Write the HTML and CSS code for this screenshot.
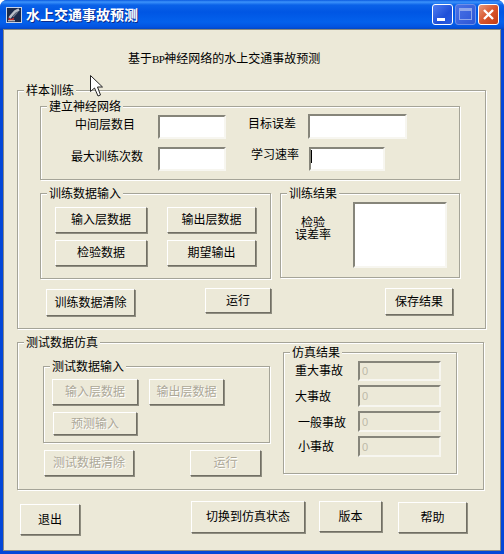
FILE: index.html
```html
<!DOCTYPE html>
<html>
<head>
    <title>水上交通事故预测</title>
    <link rel="stylesheet" href="styles.css">
</head>
<body>
    <div class="window">
        <div class="titlebar">
            <svg class="app-icon" width="16" height="16" viewBox="0 0 16 16">
                <rect x="0.5" y="0.5" width="15" height="15" fill="#1c2a4a" stroke="#c9d3e6"/>
                <path d="M13 2.5 L9 4.5 L5 9 L3.5 11" fill="none" stroke="#b9bec8" stroke-width="2.6"/>
                <path d="M11.5 5 L7 10" fill="none" stroke="#6c7486" stroke-width="1.2"/>
                <path d="M2.5 11.5 L5 13 L8 11.5" fill="none" stroke="#c22f2f" stroke-width="1.8"/>
                <path d="M2 13.8 L9 13.8" fill="none" stroke="#e8e4e0" stroke-width="1"/>
            </svg>
            <span class="title-text">水上交通事故预测</span>
            <div class="caption-btn minimize"><span class="min-glyph"></span></div>
            <div class="caption-btn maximize"><span class="max-glyph"></span></div>
            <div class="caption-btn close">
                <svg width="13" height="13" viewBox="0 0 13 13">
                    <path d="M2 2 L11 11 M11 2 L2 11" stroke="#fff" stroke-width="2.4"/>
                </svg>
            </div>
        </div>

        <div class="client">
            <div class="heading">基于<span class="latin">BP</span>神经网络的水上交通事故预测</div>

            <div class="group sample-group">
                <div class="group-title">样本训练</div>

                <div class="group network-group">
                    <div class="group-title">建立神经网络</div>
                    <div class="row">
                        <label class="lbl-layers">中间层数目</label>
                        <input class="field field-layers" type="text">
                        <label class="lbl-error">目标误差</label>
                        <input class="field field-error" type="text">
                    </div>
                    <div class="row row-second">
                        <label class="lbl-times">最大训练次数</label>
                        <input class="field field-times" type="text">
                        <label class="lbl-rate">学习速率</label>
                        <input class="field field-rate" type="text">
                    </div>
                </div>

                <div class="row train-row">
                    <div class="group train-input">
                        <div class="group-title">训练数据输入</div>
                        <div class="train-buttons">
                            <button class="btn">输入层数据</button>
                            <button class="btn">输出层数据</button>
                            <button class="btn">检验数据</button>
                            <button class="btn">期望输出</button>
                        </div>
                    </div>
                    <div class="group train-result">
                        <div class="group-title">训练结果</div>
                        <div class="row">
                            <div class="result-label">检验<br>误差率</div>
                            <textarea class="field result-box"></textarea>
                        </div>
                    </div>
                </div>

                <div class="row action-row">
                    <button class="btn btn-clear">训练数据清除</button>
                    <button class="btn btn-run">运行</button>
                    <button class="btn btn-save">保存结果</button>
                </div>
            </div>

            <div class="group sim-group">
                <div class="group-title">测试数据仿真</div>
                <div class="row">
                    <div class="sim-left">
                        <div class="group test-input">
                            <div class="group-title">测试数据输入</div>
                            <div class="test-buttons">
                                <button class="btn" disabled>输入层数据</button>
                                <button class="btn" disabled>输出层数据</button>
                                <button class="btn btn-predict" disabled>预测输入</button>
                            </div>
                        </div>
                        <div class="row test-actions">
                            <button class="btn btn-test-clear" disabled>测试数据清除</button>
                            <button class="btn btn-test-run" disabled>运行</button>
                        </div>
                    </div>
                    <div class="group sim-result">
                        <div class="group-title">仿真结果</div>
                        <div class="sim-rows">
                            <div class="sim-row sim-row-a">
                                <label class="sim-label">重大事故</label>
                                <input class="field sim-field" type="text" value="0" disabled>
                            </div>
                            <div class="sim-row sim-row-b">
                                <label class="sim-label">大事故</label>
                                <input class="field sim-field" type="text" value="0" disabled>
                            </div>
                            <div class="sim-row sim-row-c">
                                <label class="sim-label">一般事故</label>
                                <input class="field sim-field" type="text" value="0" disabled>
                            </div>
                            <div class="sim-row sim-row-c">
                                <label class="sim-label sim-label-last">小事故</label>
                                <input class="field sim-field" type="text" value="0" disabled>
                            </div>
                        </div>
                    </div>
                </div>
            </div>

            <div class="row bottom-row">
                <button class="btn btn-exit">退出</button>
                <button class="btn btn-switch">切换到仿真状态</button>
                <button class="btn btn-version">版本</button>
                <button class="btn btn-help">帮助</button>
            </div>
        </div>

        <svg class="cursor" width="14" height="22" viewBox="0 0 14 22">
            <path d="M0.5 0.5 L0.5 16.5 L4.5 13 L8 21 L10.5 20 L7.5 12 L12.5 12 Z" fill="#fff" stroke="#222" stroke-width="1"/>
        </svg>
    </div>
</body>
</html>
```

FILE: styles.css
```css
body {
    margin: 0;
    background: #fff;
    font-family: "Noto Sans CJK SC", "Liberation Sans", sans-serif;
    font-size: 12px;
    color: #000;
}

.window {
    position: relative;
    width: 504px;
    height: 554px;
    background: #0347d8;
    border-radius: 7px 7px 0 0;
    display: flex;
    flex-direction: column;
    overflow: hidden;
}

.titlebar {
    height: 30px;
    box-sizing: border-box;
    display: flex;
    align-items: center;
    padding: 0 5px 2px 6px;
    background: linear-gradient(#0a5ae0 0, #3c93fb 2px, #0a62e8 5px, #0056e4 12px, #0461ec 22px, #0353e0 27px, #0242b8 30px);
}

.app-icon {
    margin-top: 1px;
}

.title-text {
    flex: 1;
    margin-left: 4px;
    color: #fff;
    font-size: 14px;
    font-weight: bold;
    line-height: 20px;
    text-shadow: 1px 1px 0 #0c2a8c;
}

.caption-btn {
    width: 21px;
    height: 21px;
    box-sizing: border-box;
    margin-left: 2px;
    border: 1px solid #fff;
    border-radius: 3px;
    display: flex;
    align-items: center;
    justify-content: center;
}

.minimize {
    background: linear-gradient(135deg, #4f7df0, #1f4fd8 60%, #2a5de0);
    align-items: flex-end;
    justify-content: flex-start;
}

.min-glyph {
    width: 8px;
    height: 3px;
    margin: 0 0 3px 4px;
    background: #fff;
}

.maximize {
    background: linear-gradient(135deg, #4a72e6, #2c56d6);
    border-color: #6d8fe8;
}

.max-glyph {
    width: 11px;
    height: 8px;
    border: 1px solid #8ea6ea;
    border-top-width: 3px;
}

.close {
    background: linear-gradient(135deg, #e89a7c, #d8552c 50%, #c23c14);
}

.client {
    flex: 1;
    margin: 0 4px 4px;
    background: #ece9d8;
    box-shadow: 0 0 0 1px #8a8a80;
}

.heading {
    margin: 21px 0 0 124px;
    height: 14px;
    line-height: 14px;
}

.latin {
    font-family: "Liberation Serif", serif;
    font-size: 11px;
    letter-spacing: -0.6px;
}

.row {
    display: flex;
    align-items: flex-start;
}

.group {
    box-sizing: border-box;
    border: 1px solid #a5a498;
    box-shadow: 1px 1px 0 #fff, inset 1px 1px 0 #fff;
}

.group-title {
    width: max-content;
    height: 16px;
    line-height: 16px;
    margin: -9px 0 0 6px;
    padding: 0 2px;
    background: #ece9d8;
}

label {
    line-height: 14px;
    white-space: nowrap;
}

.field {
    box-sizing: border-box;
    display: block;
    margin: 0;
    padding: 0 0 0 2px;
    border: 2px solid;
    border-color: #86857a #f7f6f0 #f7f6f0 #86857a;
    background: #fff;
    border-radius: 0;
    outline: none;
    resize: none;
}

.btn {
    box-sizing: border-box;
    padding: 0 0 3px;
    height: 26px;
    border: 1px solid;
    border-color: #fff #716f64 #716f64 #fff;
    box-shadow: 1px 1px 0 #8f8d80;
    background: #ece9d8;
    font-family: inherit;
    font-size: 12px;
    color: #000;
    white-space: nowrap;
}

.btn:disabled {
    color: #aca899;
    text-shadow: 1px 1px 0 #fff;
}

/* upper group */
.sample-group {
    width: 469px;
    height: 239px;
    margin: 25px 0 0 13px;
}

.network-group {
    width: 420px;
    height: 74px;
    margin: 8px 0 0 22px;
}

.lbl-layers {
    margin: 3px 0 0 34px;
    width: 60px;
}

.field-layers {
    width: 68px;
    height: 24px;
    margin: 1px 0 0 23px;
}

.lbl-error {
    margin: 2px 0 0 22px;
    width: 48px;
}

.field-error {
    width: 99px;
    height: 25px;
    margin-left: 12px;
}

.row-second {
    margin-top: 8px;
}

.lbl-times {
    margin: 2px 0 0 30px;
    width: 72px;
}

.field-times {
    width: 68px;
    height: 24px;
    margin-left: 15px;
}

.lbl-rate {
    margin-left: 25px;
    width: 48px;
}

.field-rate {
    width: 76px;
    height: 24px;
    margin-left: 10px;
    background: linear-gradient(#000, #000) 0 1px / 1px 13px no-repeat #fff;
}

.train-row {
    margin: 13px 0 0 22px;
    gap: 9px;
}

.train-input {
    width: 231px;
    height: 86px;
}

.train-buttons {
    display: grid;
    grid-template-columns: 92px 89px;
    grid-auto-rows: 26px;
    gap: 7px 20px;
    margin: 6px 0 0 14px;
}

.train-result {
    width: 180px;
    height: 85px;
}

.result-label {
    width: 36px;
    margin: 15px 0 0 14px;
    line-height: 12px;
    text-align: center;
    white-space: nowrap;
}

.result-box {
    width: 94px;
    height: 66px;
    margin: 1px 0 0 22px;
}

.action-row {
    margin-top: 9px;
}

.btn-clear {
    width: 89px;
    height: 27px;
    margin: 1px 0 0 28px;
}

.btn-run {
    width: 66px;
    height: 25px;
    margin-left: 70px;
}

.btn-save {
    width: 68px;
    height: 27px;
    margin-left: 114px;
}

/* lower group */
.sim-group {
    width: 467px;
    height: 148px;
    margin: 13px 0 0 13px;
}

.sim-left {
    margin: 16px 0 0 25px;
}

.test-input {
    width: 227px;
    height: 77px;
}

.test-buttons {
    display: grid;
    grid-template-columns: 86px 75px;
    gap: 7px 11px;
    margin: 5px 0 0 8px;
}

.btn-predict {
    width: 84px;
    height: 23px;
    margin-left: 1px;
}

.test-actions {
    margin: 7px 0 0 1px;
}

.btn-test-clear {
    width: 90px;
}

.btn-test-run {
    width: 71px;
    margin-left: 56px;
}

.sim-result {
    width: 174px;
    height: 122px;
    margin: 2px 0 0 13px;
}

.sim-rows {
    display: flex;
    flex-direction: column;
    gap: 4px;
    margin-top: 1px;
}

.sim-row {
    display: grid;
    grid-template-columns: 74px 83px;
    align-items: center;
    height: 21px;
}

.sim-row-a {
    height: 20px;
}

.sim-row-b {
    height: 22px;
}

.sim-label {
    margin-left: 11px;
}

.sim-row-a .sim-label {
    margin-bottom: 2px;
}

.sim-row-c .sim-label {
    margin-left: 14px;
}

.sim-row-c .sim-label-last {
    margin-bottom: 2px;
}

.sim-field {
    height: 100%;
    background: #ece9d8;
    font-family: "Liberation Sans", sans-serif;
    font-size: 11px;
    color: #bdb9a8;
}

/* bottom buttons */
.bottom-row {
    margin-top: 11px;
}

.btn-exit {
    width: 60px;
    height: 31px;
    margin: 3px 0 0 16px;
}

.btn-switch {
    width: 114px;
    height: 32px;
    margin-left: 111px;
}

.btn-version {
    width: 63px;
    height: 31px;
    margin-left: 14px;
}

.btn-help {
    width: 69px;
    height: 31px;
    margin: 1px 0 0 16px;
}

.cursor {
    position: absolute;
    left: 90px;
    top: 75px;
}
```
